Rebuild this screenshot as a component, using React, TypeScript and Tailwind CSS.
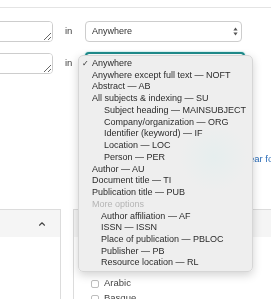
import { ChevronUp } from "lucide-react";

const items: { label: string; indent?: number; check?: boolean; muted?: boolean }[] = [
  { label: "Anywhere", check: true },
  { label: "Anywhere except full text — NOFT" },
  { label: "Abstract — AB" },
  { label: "All subjects & indexing — SU" },
  { label: "Subject heading — MAINSUBJECT", indent: 12 },
  { label: "Company/organization — ORG", indent: 12 },
  { label: "Identifier (keyword) — IF", indent: 12 },
  { label: "Location — LOC", indent: 12 },
  { label: "Person — PER", indent: 12 },
  { label: "Author — AU" },
  { label: "Document title — TI" },
  { label: "Publication title — PUB" },
  { label: "More options", muted: true },
  { label: "Author affiliation — AF", indent: 9 },
  { label: "ISSN — ISSN", indent: 9 },
  { label: "Place of publication — PBLOC", indent: 9 },
  { label: "Publisher — PB", indent: 9 },
  { label: "Resource location — RL", indent: 9 },
];

function Arrows() {
  return (
    <svg width="5" height="9" viewBox="0 0 5 9" className="text-[#555]">
      <path d="M2.5 0.5 L4.6 3.4 H0.4 Z" fill="currentColor" />
      <path d="M2.5 8.5 L4.6 5.6 H0.4 Z" fill="currentColor" />
    </svg>
  );
}

export default function App() {
  return (
    <div className="relative h-[299px] w-[271px] overflow-hidden bg-white font-['Liberation_Sans',_'DejaVu_Sans',_sans-serif] text-[#333]">
      <div className="h-[7px]" />
      <div className="h-px bg-[#e4e4e4]" />

      {/* search rows */}
      <div className="mt-[13px] flex items-center">
        <textarea className="-ml-[60px] h-[21px] w-[113px] shrink-0 rounded-[4px] border border-[#cdcdcd] bg-white" />
        <span className="ml-[12px] w-[20px] text-[9.5px] text-[#444]">in</span>
        <div className="flex h-[21px] w-[157px] shrink-0 items-center justify-between rounded-[4px] border border-[#cdcdcd] bg-white pl-[6px] pr-[3px] text-[9px]">
          <span>Anywhere</span>
          <Arrows />
        </div>
      </div>

      <div className="mt-[10px] flex items-center">
        <textarea className="-ml-[60px] h-[21px] w-[113px] shrink-0 rounded-[4px] border border-[#cdcdcd] bg-white" />
        <span className="ml-[12px] w-[20px] text-[9.5px] text-[#444]">in</span>
        <div className="h-[22px] w-[160px] shrink-0 rounded-[4px] border-2 border-[#1f8c8c] bg-white shadow-[0_0_2px_#7cc]" />
      </div>

      <div className="mt-[79px] pl-[240px] text-[9.5px] leading-[12px] whitespace-nowrap text-[#2a6cb8]">Clear form</div>

      {/* filter panels */}
      <div className="mt-[44px] flex">
        <div className="-ml-[40px] h-[100px] w-[101px] shrink-0 border border-[#dcdcdc]">
          <div className="flex h-[27px] items-center justify-end bg-[#f5f5f5] pr-[13px]">
            <ChevronUp size={10} strokeWidth={2.6} className="text-[#444]" />
          </div>
        </div>
        <div className="ml-[12px] h-[100px] w-[250px] shrink-0 border border-[#dcdcdc]">
          <div className="h-[27px] bg-[#f5f5f5]" />
          <div className="pl-[17px] pt-[39px] text-[9.5px] text-[#444]">
            <div className="flex h-[15px] items-center gap-[5px]">
              <span className="h-[8px] w-[8px] rounded-[2px] border border-[#bdbdbd] bg-white" />
              Arabic
            </div>
            <div className="flex h-[15px] items-center gap-[5px]">
              <span className="h-[8px] w-[8px] rounded-[2px] border border-[#bdbdbd] bg-white" />
              Basque
            </div>
          </div>
        </div>
      </div>

      {/* open select menu */}
      <div className="absolute left-[78px] top-[55px] w-[175px] rounded-[5px] border border-[#d6d6d6] bg-[radial-gradient(circle_at_78%_47%,#e6eeee_0,#eeeeee_34px)] py-[2px] text-[9px] leading-[11.74px] text-[#2b2b2b] shadow-[0_3px_10px_rgba(0,0,0,0.18)]">
        {items.map((it) => (
          <div key={it.label} className="flex whitespace-nowrap">
            <span className="w-[13px] pl-[3px] text-[8px]">{it.check ? "✓" : ""}</span>
            <span
              className={it.muted ? "text-[#b5b5b5]" : ""}
              style={{ paddingLeft: it.indent ?? 0 }}
            >
              {it.label}
            </span>
          </div>
        ))}
      </div>
    </div>
  );
}
